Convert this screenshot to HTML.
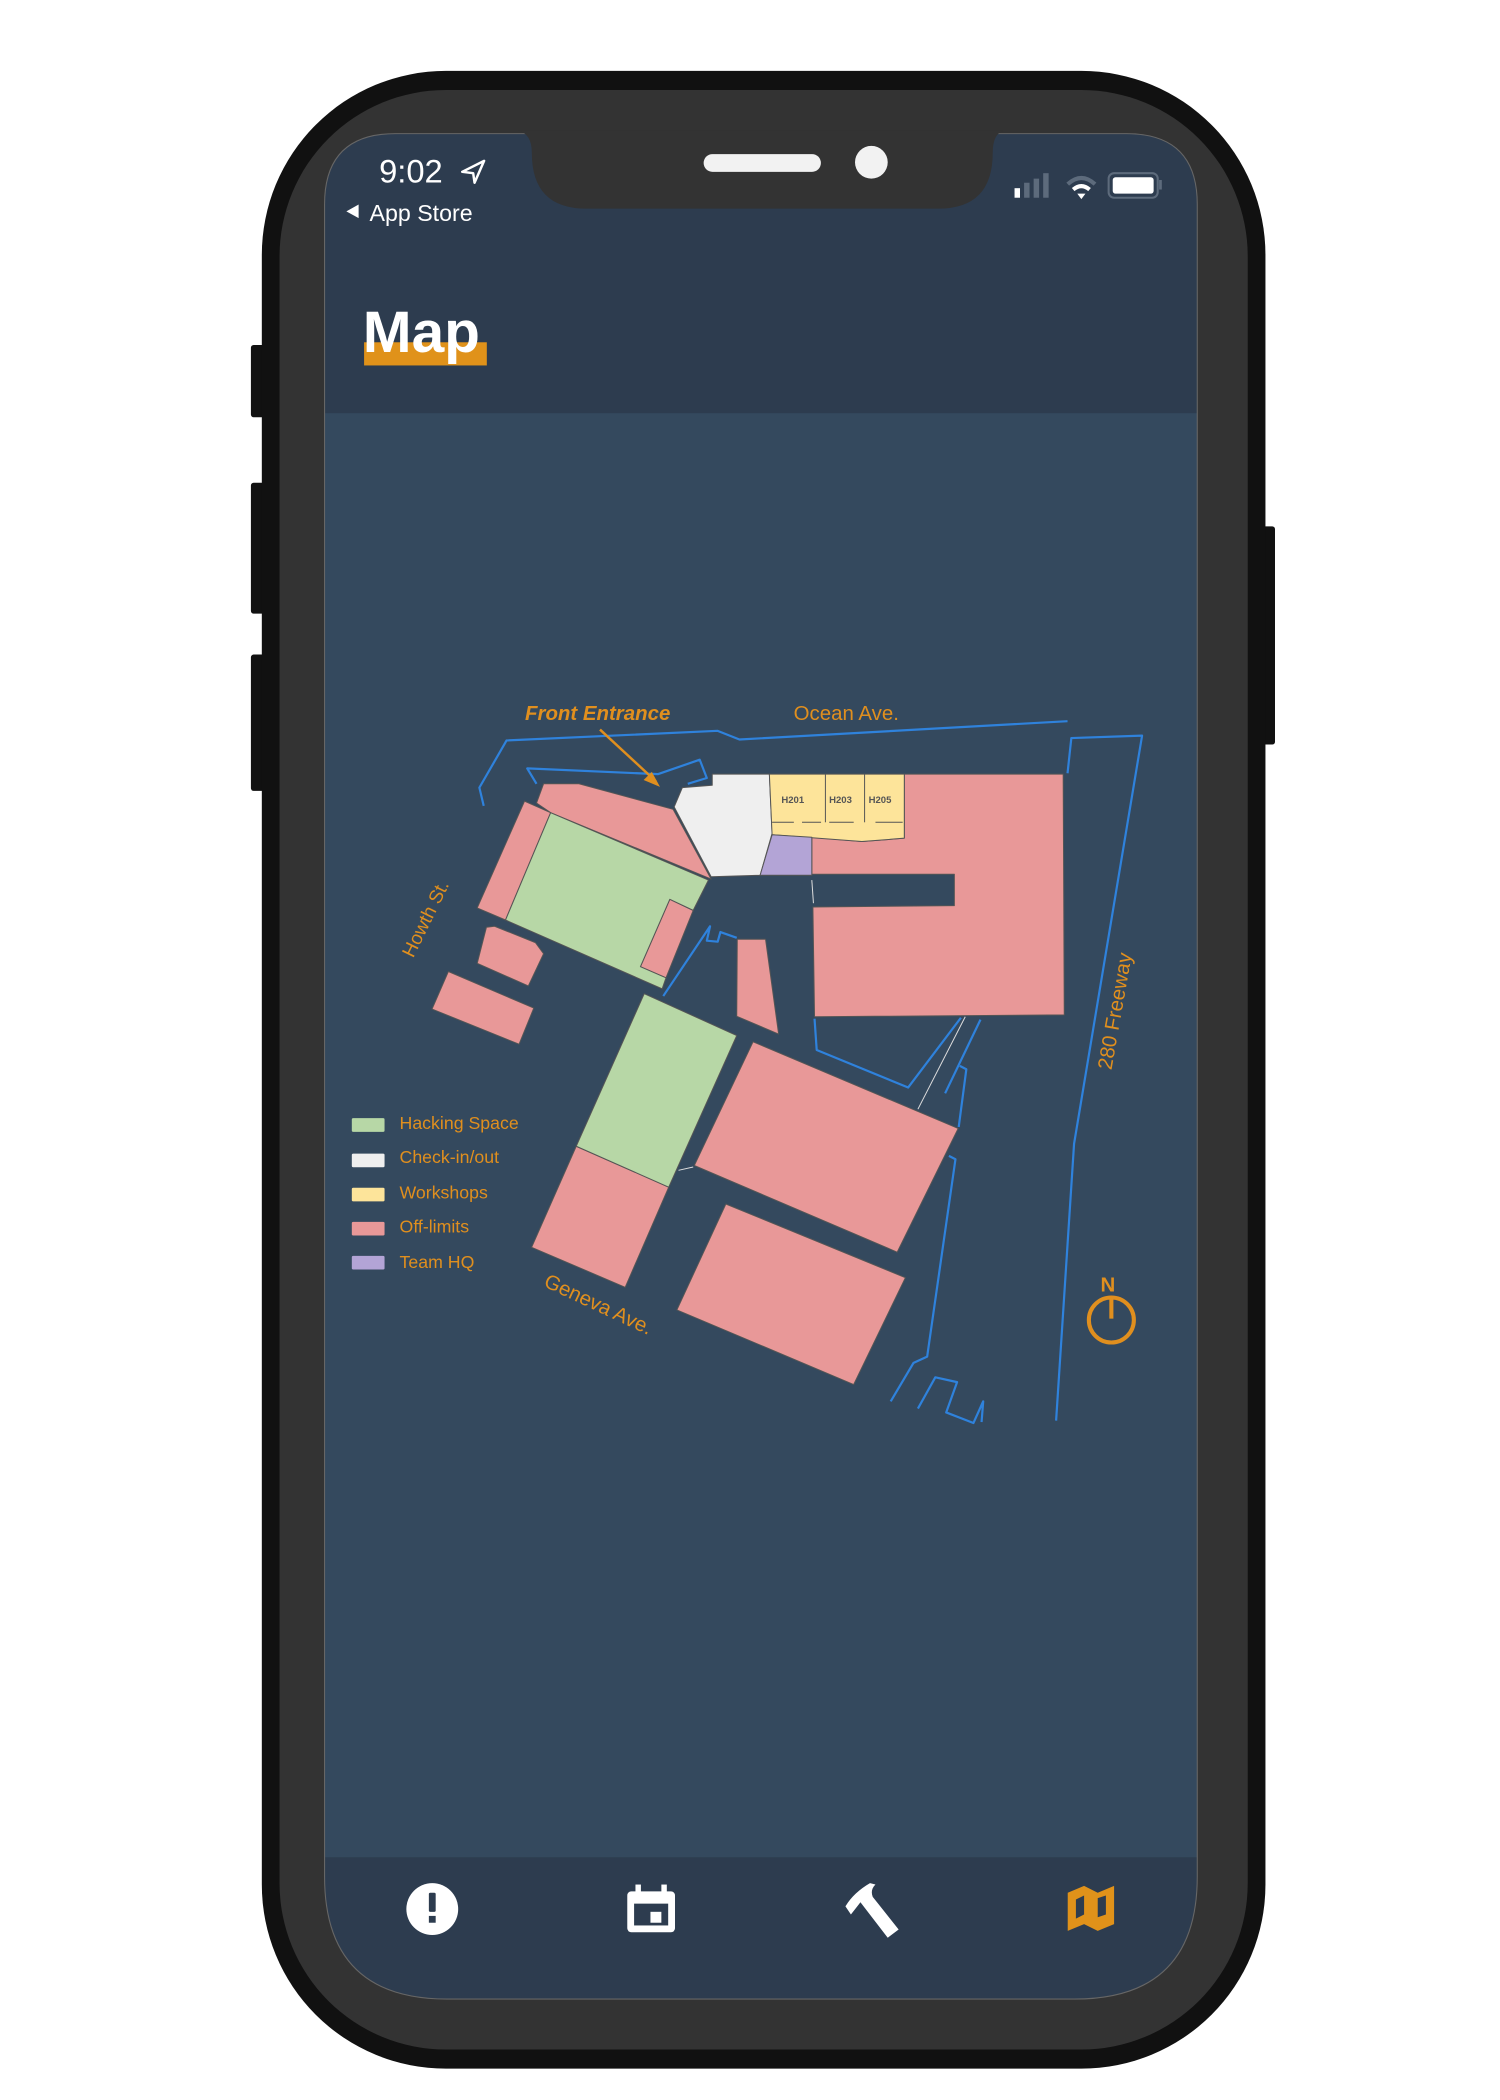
<!DOCTYPE html>
<html><head><meta charset="utf-8"><style>
html,body{margin:0;padding:0;background:#fff;}
svg{display:block;}
text{font-family:"Liberation Sans",sans-serif;}
</style></head><body>
<svg width="1500" height="2100" viewBox="0 0 1100 1540" preserveAspectRatio="none" xmlns="http://www.w3.org/2000/svg">
<rect width="1100" height="1540" fill="#fff"/>
<rect x="184" y="253" width="12" height="53" rx="2" fill="#111"/>
<rect x="184" y="354" width="12" height="96" rx="2" fill="#111"/>
<rect x="184" y="480" width="12" height="100" rx="2" fill="#111"/>
<rect x="924" y="386" width="11" height="160" rx="2" fill="#111"/>
<rect x="192" y="52" width="736" height="1465" rx="135" fill="#111"/>
<rect x="205" y="66" width="710" height="1437" rx="122" fill="#333"/>
<defs>
<clipPath id="scr">
<path d="M290 98 H826 Q878 98 878 150 V1376 Q878 1466 788 1466 H328 Q238 1466 238 1376 V150 Q238 98 290 98 Z"/>
</clipPath>
</defs>
<g clip-path="url(#scr)">
<rect x="238" y="98" width="640" height="1368" fill="#2d3c4f"/>
<rect x="238" y="303" width="640" height="1059" fill="#34495e"/>
</g>
<path d="M290 98 H826 Q878 98 878 150 V1376 Q878 1466 788 1466 H328 Q238 1466 238 1376 V150 Q238 98 290 98 Z" fill="none" stroke="#666" stroke-width="0.8"/>
<path d="M380 96 H736 Q728 98 728 112 Q728 153 688 153 H430 Q390 153 390 112 Q390 98 380 96 Z" fill="#333"/>
<rect x="516" y="113" width="86" height="13" rx="6.5" fill="#f2f2f2"/>
<ellipse cx="639" cy="119" rx="12" ry="12" fill="#f2f2f2"/>
<text x="278" y="134" font-size="24" fill="#fff">9:02</text>
<path d="M355 118 L339 126 L347 127 L348 134 Z" fill="none" stroke="#fff" stroke-width="1.8" stroke-linejoin="round"/>
<path d="M254 155 L263 150 L263 160 Z" fill="#fff"/>
<text x="271" y="162" font-size="17" fill="#fff">App Store</text>
<rect x="744" y="138" width="4" height="7" fill="#fff"/>
<rect x="751" y="134" width="4" height="11" fill="#5d6b7c"/>
<rect x="758" y="131" width="4" height="14" fill="#5d6b7c"/>
<rect x="765" y="127" width="4" height="18" fill="#5d6b7c"/>
<path d="M783 135 Q793 126 803 135" fill="none" stroke="#5d6b7c" stroke-width="3"/>
<path d="M787 139 Q793 134 799 139" fill="none" stroke="#fff" stroke-width="3"/>
<path d="M790 142 L793 146 L796 142 Z" fill="#fff"/>
<rect x="813" y="127" width="36" height="18" rx="4" fill="none" stroke="#5d6b7c" stroke-width="1.5"/>
<rect x="816" y="130" width="30" height="12" rx="2" fill="#fff"/>
<rect x="850" y="132" width="2" height="7" fill="#5d6b7c"/>
<!-- title -->
<rect x="267" y="251" width="90" height="17" fill="#e0921a"/>
<text x="266" y="258" font-size="43" font-weight="bold" fill="#fff" textLength="86" lengthAdjust="spacingAndGlyphs">Map</text>
<!-- map -->
<g transform="translate(247,507) scale(0.399,0.353)" stroke-linejoin="round">
<g fill="#e89898" stroke="#555" stroke-width="1">
<polygon points="380,192 445,192 618,245 688,390 393,252 367,232" vector-effect="non-scaling-stroke"/>
<polygon points="345,228 393,252 310,475 258,450" vector-effect="non-scaling-stroke"/>
<polygon points="1043,172 1335,172 1337,672 878,676 875,448 1135,445 1135,380 873,380 873,303 965,312 1043,305" vector-effect="non-scaling-stroke"/>
<polygon points="736,515 788,515 812,712 735,675" vector-effect="non-scaling-stroke"/>
<polygon points="275,490 290,488 365,522 380,545 352,612 258,565" vector-effect="non-scaling-stroke"/>
<polygon points="205,582 362,658 335,733 175,660" vector-effect="non-scaling-stroke"/>
<polygon points="440,945 610,1030 530,1238 358,1155" vector-effect="non-scaling-stroke"/>
<polygon points="765,728 1142,908 1030,1165 657,985" vector-effect="non-scaling-stroke"/>
<polygon points="715,1065 1045,1218 950,1440 625,1285" vector-effect="non-scaling-stroke"/>
<polygon points="612,432 655,455 605,595 558,572" vector-effect="non-scaling-stroke"/>
</g>
<g fill="#b7d7a6" stroke="#555" stroke-width="1">
<polygon points="393,252 683,392 655,455 612,432 558,572 605,595 598,618 310,475" vector-effect="non-scaling-stroke"/>
<polygon points="565,628 735,715 610,1030 440,945" vector-effect="non-scaling-stroke"/>
</g>
<polygon points="620,240 635,200 690,195 690,172 795,172 800,295 778,382 688,385" fill="#efefef" stroke="#555" stroke-width="1" vector-effect="non-scaling-stroke"/>
<polygon points="795,172 1043,172 1043,305 965,312 800,298" fill="#fde49a" stroke="#555" stroke-width="1" vector-effect="non-scaling-stroke"/>
<g stroke="#555" stroke-width="1" fill="none">
<line x1="898" y1="172" x2="898" y2="272" vector-effect="non-scaling-stroke"/>
<line x1="970" y1="172" x2="970" y2="272" vector-effect="non-scaling-stroke"/>
<path d="M800 272 H840 M855 272 H890 M905 272 H950 M990 272 H1040" vector-effect="non-scaling-stroke"/>
</g>
<polygon points="800,298 873,303 873,382 778,382" fill="#b3a4d6" stroke="#555" stroke-width="1" vector-effect="non-scaling-stroke"/>
<g fill="none" stroke="#2f82dc" stroke-width="2.2">
<polyline points="270,238 262,200 312,102 700,82 740,100 1343,62" vector-effect="non-scaling-stroke"/>
<polyline points="367,192 350,160 590,172 667,142 680,180 645,192" vector-effect="non-scaling-stroke"/>
<polyline points="1343,170 1350,97 1480,92 1355,940 1322,1515" vector-effect="non-scaling-stroke"/>
<polyline points="878,680 882,745 1050,823 1147,678" vector-effect="non-scaling-stroke"/>
<polyline points="1183,682 1118,835" vector-effect="non-scaling-stroke"/>
<polyline points="1143,905 1157,785 1145,778" vector-effect="non-scaling-stroke"/>
<polyline points="1125,965 1137,972 1085,1382 1060,1395 1018,1475" vector-effect="non-scaling-stroke"/>
<polyline points="1068,1490 1100,1425 1140,1435 1120,1498 1170,1520 1188,1475 1185,1518" vector-effect="non-scaling-stroke"/>
<polyline points="735,512 705,500 700,520 680,518 686,488 600,633" vector-effect="non-scaling-stroke"/>
</g>
<g stroke="#ddd" stroke-width="1" fill="none">
<line x1="1155" y1="676" x2="1068" y2="868" vector-effect="non-scaling-stroke"/>
<line x1="873" y1="392" x2="876" y2="440" vector-effect="non-scaling-stroke"/>
<line x1="628" y1="995" x2="655" y2="988" vector-effect="non-scaling-stroke"/>
</g>
</g>
<g font-size="7" fill="#555" font-weight="bold">
<text x="573" y="589">H201</text><text x="608" y="589">H203</text><text x="637" y="589">H205</text>
</g>
<g fill="#e08f1e">
<text x="385" y="528" font-size="15" font-weight="bold" font-style="italic">Front Entrance</text>
<text x="582" y="528" font-size="15">Ocean Ave.</text>
<text transform="translate(303,703) rotate(-64)" font-size="14">Howth St.</text>
<text transform="translate(815,785) rotate(-80)" font-size="15">280 Freeway</text>
<text transform="translate(398,943) rotate(25)" font-size="15">Geneva Ave.</text>
<g font-size="13">
<text x="293" y="828">Hacking Space</text>
<text x="293" y="853">Check-in/out</text>
<text x="293" y="879">Workshops</text>
<text x="293" y="904">Off-limits</text>
<text x="293" y="930">Team HQ</text>
</g>
<text x="807" y="947" font-size="15" font-weight="bold">N</text>
</g>
<line x1="440" y1="535" x2="481" y2="573" stroke="#e08f1e" stroke-width="1.8"/>
<path d="M484 577 L472 572 L478 566 Z" fill="#e08f1e"/>
<circle cx="815" cy="968" r="16.5" fill="none" stroke="#e08f1e" stroke-width="3"/>
<line x1="815" y1="951" x2="815" y2="967" stroke="#e08f1e" stroke-width="3"/>
<rect x="258" y="820" width="24" height="10" rx="1" fill="#b7d7a6"/>
<rect x="258" y="846" width="24" height="10" rx="1" fill="#efefef"/>
<rect x="258" y="871" width="24" height="10" rx="1" fill="#fde49a"/>
<rect x="258" y="896" width="24" height="10" rx="1" fill="#e89898"/>
<rect x="258" y="921" width="24" height="10" rx="1" fill="#b3a4d6"/>
<!-- tab icons -->
<circle cx="317" cy="1400" r="19" fill="#fff"/>
<rect x="314.5" y="1388" width="5" height="14" rx="1" fill="#2d3c4f"/>
<rect x="314.5" y="1405" width="5" height="5" fill="#2d3c4f"/>
<rect x="460" y="1387" width="35" height="30" rx="3" fill="#fff"/>
<rect x="465" y="1396" width="25" height="16" fill="#2d3c4f"/>
<rect x="477" y="1402" width="8" height="8" fill="#fff"/>
<rect x="466" y="1382" width="4" height="7" fill="#fff"/>
<rect x="485" y="1382" width="4" height="7" fill="#fff"/>
<path d="M638 1381 Q626 1388 620 1398 L624 1404 L631 1395 L651 1421 L659 1415 L640 1391 Q638 1386 642 1382 Z" fill="#fff"/>
<path d="M783 1388 L795 1383 L805 1388 L817 1383 V1411 L805 1416 L795 1411 L783 1416 Z M789 1393 V1407 L795 1404 V1390 Z M805 1392 V1406 L811 1404 V1390 Z" fill="#e0921a" fill-rule="evenodd"/>
</svg>
</body></html>
